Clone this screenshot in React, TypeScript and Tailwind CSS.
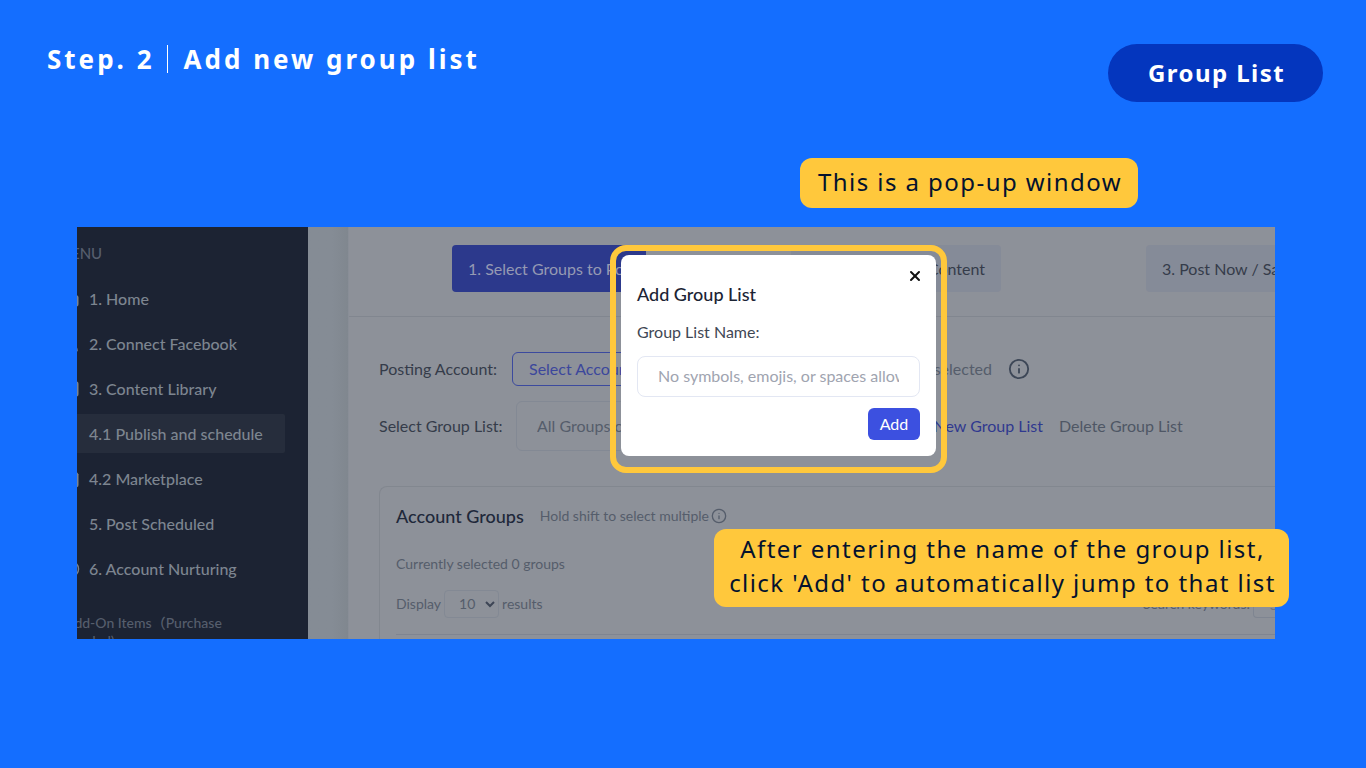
import type { LucideIcon } from 'lucide-react';
import { Circle, House, Info, ShoppingBag, Square, UserRound, X } from 'lucide-react';

type MenuItem = { label: string; icon?: LucideIcon; active?: boolean };

const MENU: MenuItem[] = [
    { label: '1. Home', icon: House },
    { label: '2. Connect Facebook', icon: UserRound },
    { label: '3. Content Library', icon: Square },
    { label: '4.1 Publish and schedule', active: true },
    { label: '4.2 Marketplace', icon: ShoppingBag },
    { label: '5. Post Scheduled' },
    { label: '6. Account Nurturing', icon: Circle },
];

function Header() {
    return (
        <header className="flex items-start justify-between pt-[44px] pl-[47px] pr-[43px] font-bold text-white">
            <h1 className="flex h-[30px] items-center text-[26px] tracking-[3px]">
                <span>Step. 2</span>
                <span className="mx-3 h-7 w-px bg-white" />
                <span className="ml-1">Add new group list</span>
            </h1>
            <div className="flex h-[58px] w-[215px] items-center justify-center rounded-full bg-[#0436be] pl-0.5 text-2xl tracking-[0.06em]">
                Group List
            </div>
        </header>
    );
}

function Sidebar() {
    return (
        <aside className="w-[231px] shrink-0 overflow-hidden bg-[#1c2333] font-medium">
            {/* scrolled sideways, so the icons are mostly cut off */}
            <div className="-ml-7 flex flex-col">
                <h2 className="ml-2 mt-4 h-5 text-[15px]/5 text-[#565e6d]">MENU</h2>
                <nav className="mt-4 flex w-[236px] flex-col gap-1.5">
                    {MENU.map(({ label, icon: Icon, active }) => (
                        <a
                            key={label}
                            href="#"
                            className={`flex h-[39px] items-center gap-[9px] whitespace-nowrap rounded-xs pl-[13px] text-base text-[#7d8590] ${active ? 'bg-[#262d3c]' : ''}`}
                        >
                            {Icon ? <Icon size={18} className="shrink-0" /> : <span className="w-[18px] shrink-0" />}
                            {label}
                        </a>
                    ))}
                </nav>
                <p className="ml-4 mt-[26px] text-sm/[18px] whitespace-nowrap text-[#565e6d]">
                    Add-On Items（Purchase
                    <br />
                    needed)
                </p>
            </div>
        </aside>
    );
}

function StepTabs() {
    return (
        <div className="flex h-[90px] items-start gap-[145px] border-b border-[#81868f] pl-[103px] pt-[18px] text-base whitespace-nowrap">
            <button className="h-[47px] w-[194px] shrink-0 rounded bg-[#2c398c] px-4 text-left text-[#959ab3]">
                1. Select Groups to Post
            </button>
            <button className="h-[47px] w-[210px] shrink-0 rounded bg-[#858b98] px-4 text-right text-[#353c4a]">
                2. Choose Content
            </button>
            <button className="h-[47px] shrink-0 rounded bg-[#858b98] px-4 text-left text-[#353c4a]">
                3. Post Now / Save
            </button>
        </div>
    );
}

function AccountGroups() {
    return (
        <section className="mt-[35px] ml-[30px] min-h-[200px] rounded-tl-lg border-t border-l border-[#82878f] pl-4 text-[#555d6b]">
            <div className="mt-[15px] flex h-7 items-center">
                <h3 className="text-lg font-medium text-[#20283a]">Account Groups</h3>
                <span className="ml-4 mr-0.5 text-sm">Hold shift to select multiple</span>
                <Info size={16} />
            </div>
            <p className="mt-6 text-sm/5">Currently selected 0 groups</p>
            <div className="mt-4 flex h-7 items-center justify-between text-sm">
                <label className="flex items-center gap-[3px]">
                    Display
                    <span className="relative flex">
                        <select className="h-7 w-[55px] appearance-none rounded border border-[#838994] pl-3.5 text-sm">
                            <option>10</option>
                        </select>
                        <svg viewBox="0 0 10 8" className="absolute right-1 top-2.5 h-2 w-2.5" fill="none" stroke="#3d4555" strokeWidth="2">
                            <path d="M1 2l4 4 4-4" />
                        </svg>
                    </span>
                    results
                </label>
                <label className="flex items-center gap-[3px]">
                    Search keywords:
                    <input placeholder="Search" className="h-7 w-[22px] rounded-l border border-r-0 border-[#7f8591] pl-4 placeholder:text-[#6b727e]" />
                </label>
            </div>
            <div className="mt-4 border-t border-[#7f8591]" />
        </section>
    );
}

function Workspace() {
    return (
        <main className="min-w-0 flex-1 overflow-hidden border-l border-[#898e97] bg-[#8d9199] text-base text-[#353c4a]">
            <StepTabs />
            <div className="ml-[30px] mt-[35px] flex h-[34px] items-center whitespace-nowrap">
                <span className="w-[133px] shrink-0">Posting Account:</span>
                <button className="h-[34px] w-[140px] shrink-0 rounded-md border border-[#3c4a9e] px-4 text-left text-[#3c479c]">
                    Select Account
                </button>
                <span className="w-[340px] shrink-0 text-right text-[#555d6b]">0 accounts selected</span>
                <Info size={22} className="ml-4 shrink-0 text-[#3d4757]" />
            </div>
            <div className="ml-[30px] mt-[15px] flex h-[50px] items-center whitespace-nowrap">
                <label htmlFor="group-list" className="w-[137px] shrink-0">
                    Select Group List:
                </label>
                <select id="group-list" className="h-[50px] w-[320px] shrink-0 appearance-none rounded-md border border-[#838994] px-5 text-[#555d6b]">
                    <option>All Groups currently joined</option>
                </select>
                <a href="#" className="w-[207px] shrink-0 text-right text-[#30398f]">
                    Create New Group List
                </a>
                <a href="#" className="ml-4 text-[#4f5765]">
                    Delete Group List
                </a>
            </div>
            <AccountGroups />
        </main>
    );
}

function AddGroupModal() {
    return (
        <div className="absolute left-[533px] top-[18px] h-[228px] w-[337px] rounded-2xl border-6 border-[#ffc83c] px-[5px] pt-1">
            <div role="dialog" aria-labelledby="modal-title" className="flex h-[201px] flex-col rounded-lg bg-white px-4">
                <button aria-label="Close" className="-mr-[3px] mt-[13px] self-end text-[#111111]">
                    <X size={16} strokeWidth={3} />
                </button>
                <h2 id="modal-title" className="text-lg/5 font-medium text-[#1c2434]">
                    Add Group List
                </h2>
                <label htmlFor="group-name" className="mt-4 text-base/6 text-[#3f4754]">
                    Group List Name:
                </label>
                <input
                    id="group-name"
                    placeholder="No symbols, emojis, or spaces allowed"
                    className="mt-3 h-[41px] w-full shrink-0 rounded-lg border border-[#e3e7f3] px-5 pb-0.5 text-base placeholder:text-[#a0a4b0]"
                />
                <button className="mt-[11px] h-8 w-[52px] self-end rounded-md bg-[#3c50e0] text-base text-white">Add</button>
            </div>
        </div>
    );
}

export default function App() {
    return (
        <div className="min-h-screen overflow-hidden bg-[#146eff] font-['Noto_Sans',sans-serif]">
            <Header />
            <div className="relative ml-[77px] mr-[91px] mt-[125px]">
                <div className="flex h-[412px] overflow-hidden font-['Lato','Noto_Sans_CJK_SC',sans-serif]">
                    <Sidebar />
                    <div className="w-10 shrink-0 bg-linear-to-r from-[#858c95] from-60% to-[#80878f]" />
                    <Workspace />
                    <AddGroupModal />
                </div>
                <p className="absolute -top-[69px] left-[723px] flex h-[50px] w-[338px] items-center justify-center whitespace-nowrap rounded-xl bg-[#ffc83c] pb-0.5 pl-0.5 text-2xl tracking-[0.06em] text-[#04122e]">
                    This is a pop-up window
                </p>
                <p className="absolute -right-3.5 top-[302px] w-[575px] whitespace-nowrap rounded-xl bg-[#ffc83c] pt-[3px] pb-[7px] pl-0.5 text-center text-2xl/[34px] tracking-[0.06em] text-[#04122e]">
                    After entering the name of the group list,
                    <br />
                    click 'Add' to automatically jump to that list
                </p>
            </div>
        </div>
    );
}
